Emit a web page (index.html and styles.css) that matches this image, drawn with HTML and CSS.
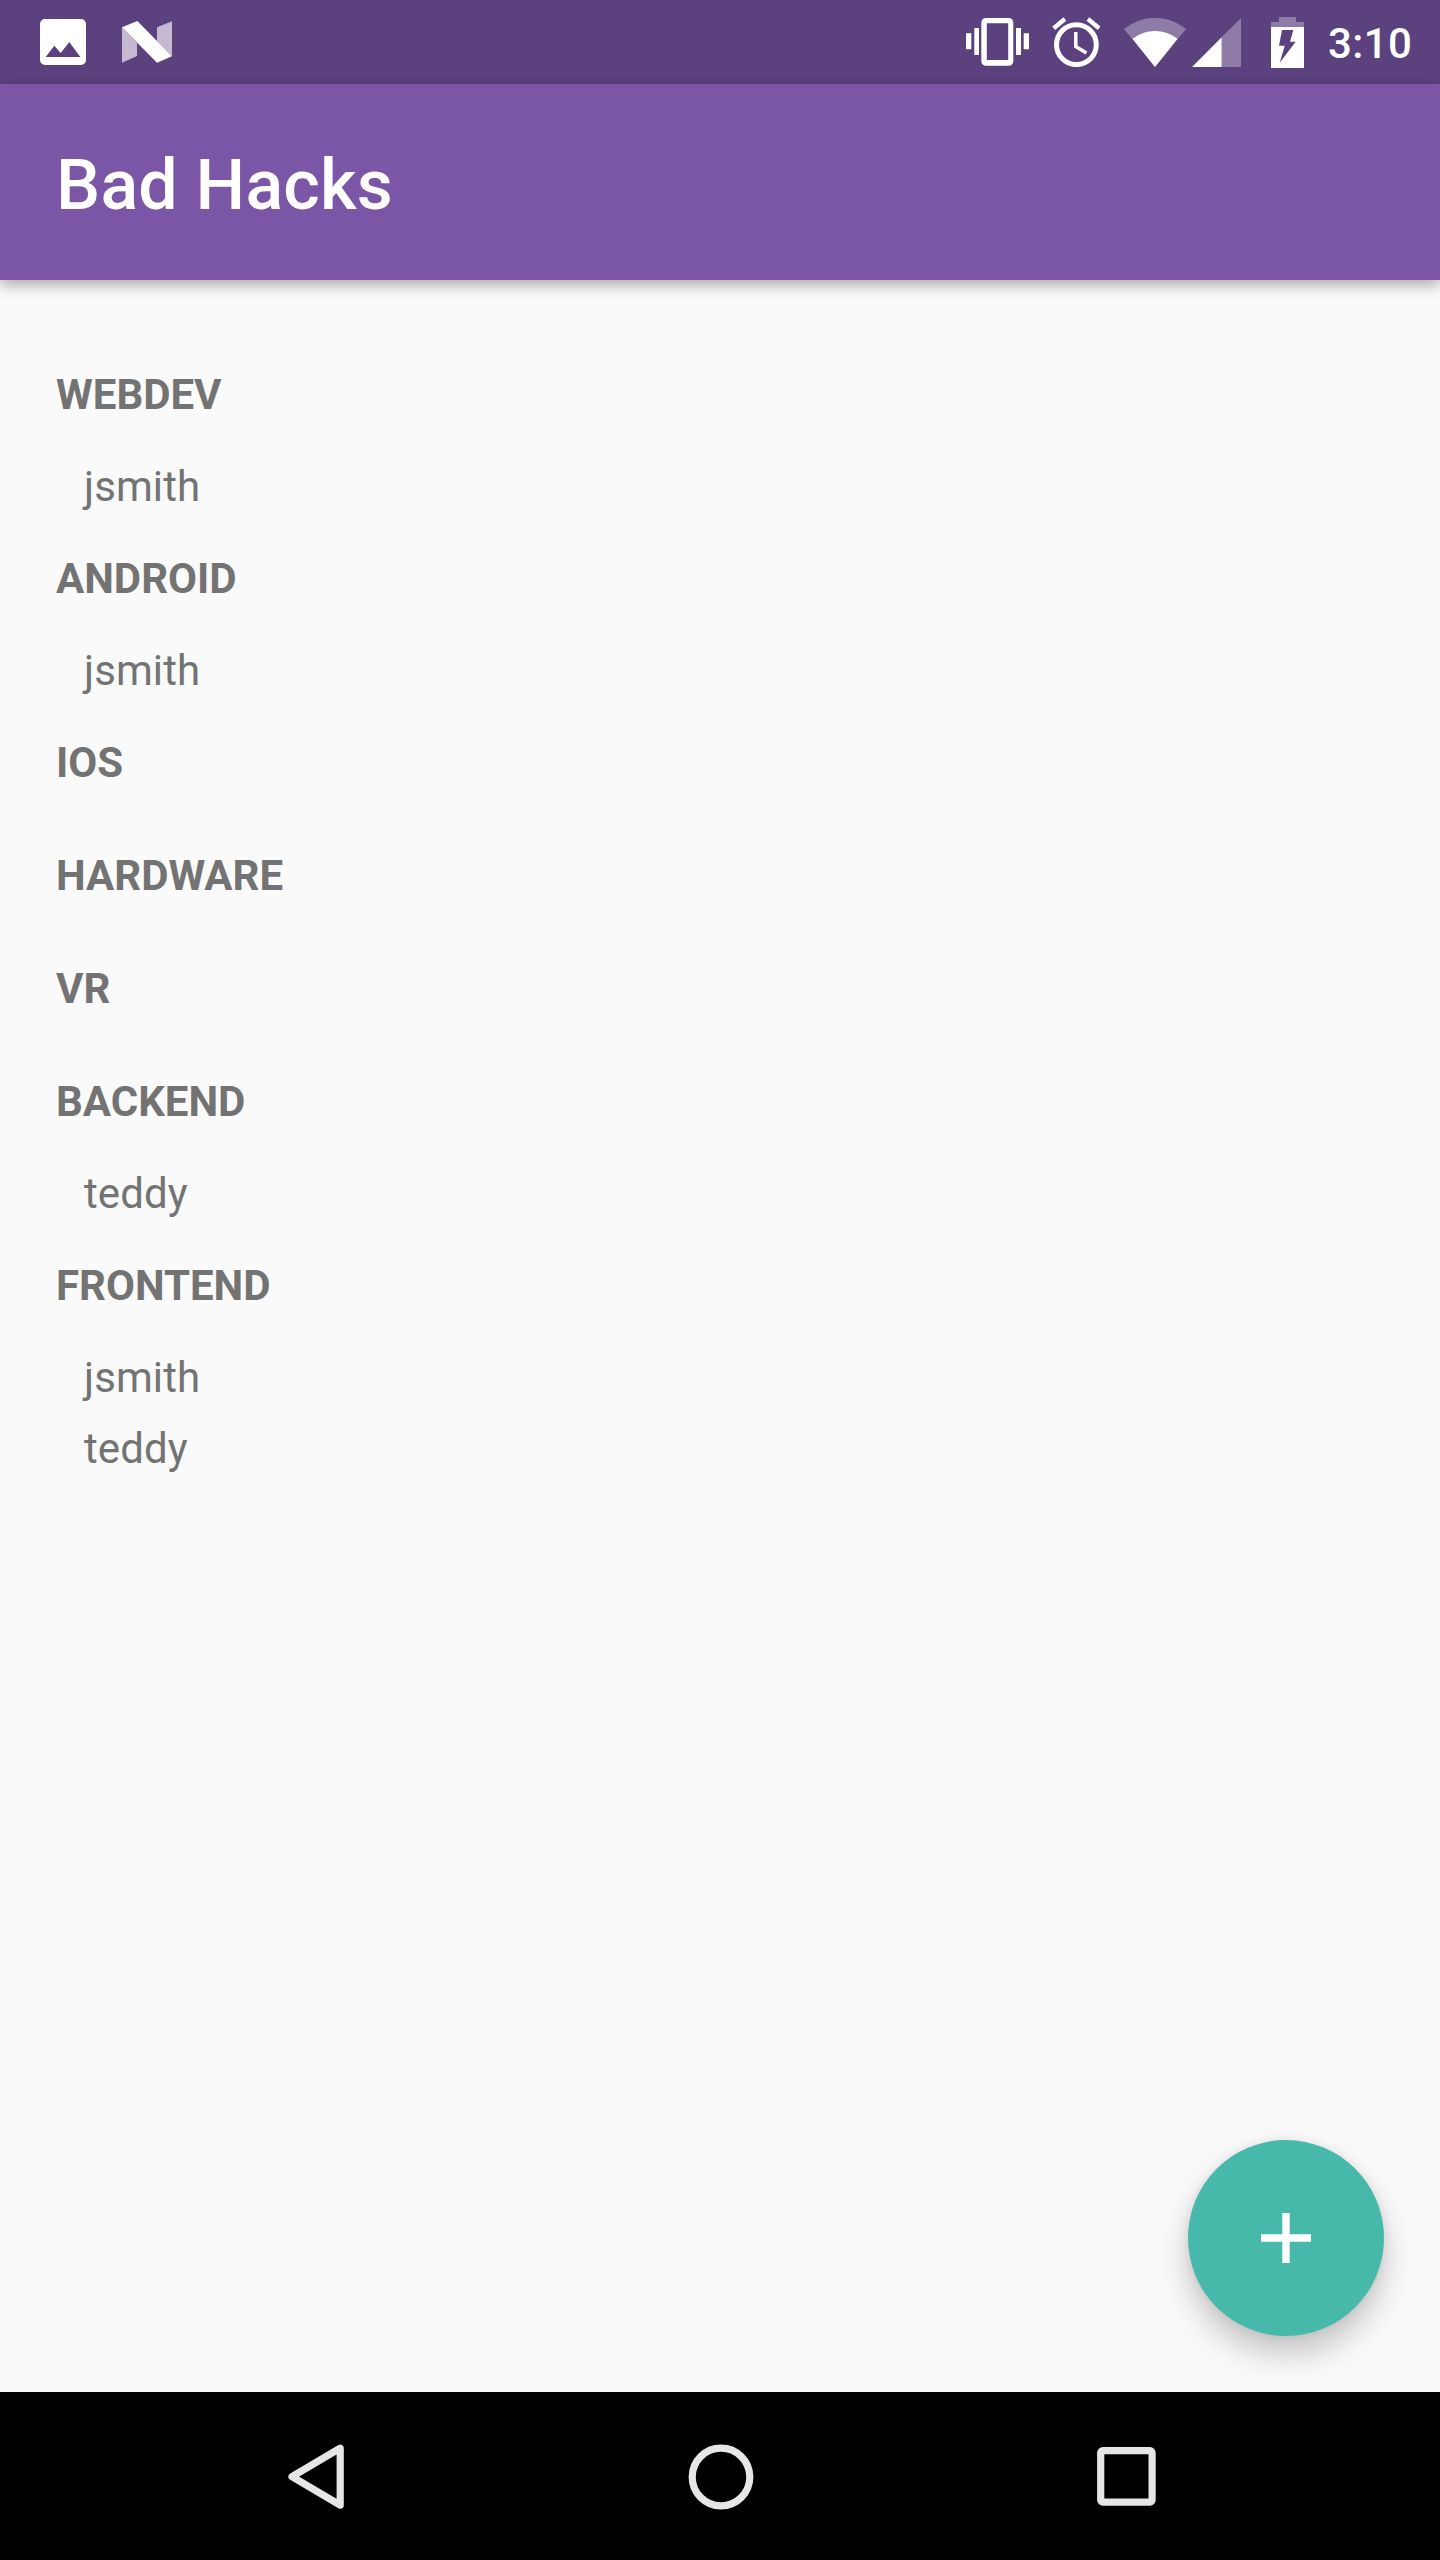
FILE: index.html
```html
<!DOCTYPE html>
<html lang="en">
<head>
    <meta charset="UTF-8">
    <meta name="viewport" content="width=device-width, initial-scale=1.0">
    <title>Bad Hacks</title>
    <link rel="stylesheet" href="styles.css">
</head>
<body>
    <div class="status-bar">
        <div class="notifications">
            <svg width="46" height="46" viewBox="0 0 46 46">
                <path fill="#fff" fill-rule="evenodd" d="M5 0H41A5 5 0 0 1 46 5V41A5 5 0 0 1 41 46H5A5 5 0 0 1 0 41V5A5 5 0 0 1 5 0ZM5.7 38H40.3L29.3 23L20.7 34L14.3 26.7Z"/>
            </svg>
            <svg width="50" height="42" viewBox="0 0 50 42">
                <path class="faded" d="M0 6.3L15 22V35L0 41.7ZM35 6.3L50 .3V35.3L35 20Z"/>
                <path fill="#fff" d="M0 6.3L15.3 0L50 35.3L35 41.7Z"/>
            </svg>
        </div>
        <div class="system">
            <svg width="63" height="48" viewBox="0 0 63 48">
                <path fill="#fff" fill-rule="evenodd" d="M0 15.3H5.3V31.3H0ZM8.3 10H13V37H8.3ZM50 10H55V37H50ZM57.7 15.3H63V31.3H57.7ZM19.8 0H42.8A4.5 4.5 0 0 1 47.3 4.5V43.2A4.5 4.5 0 0 1 42.8 47.7H19.8A4.5 4.5 0 0 1 15.3 43.2V4.5A4.5 4.5 0 0 1 19.8 0ZM20.8 5.3V42H42.2V5.3Z"/>
            </svg>
            <svg class="alarm" width="49" height="50" viewBox="0 0 49 50" fill="none" stroke="#fff">
                <circle cx="24.4" cy="27.7" r="19.9" stroke-width="5"/>
                <path stroke-width="3.5" d="M23.8 15V29.5L34.4 36"/>
                <path stroke-width="4.4" d="M1.7 11.2L12.9 2M47.1 11.2L35.9 2"/>
            </svg>
            <svg class="wifi" width="62" height="49" viewBox="0 0 62 49">
                <path class="signal-off" d="M31 49L0 11A49 49 0 0 1 62 11Z"/>
                <path fill="#fff" d="M31 49L8.5 20.8A36.7 36.7 0 0 1 53.5 20.8Z"/>
            </svg>
            <svg class="cell" width="49" height="49" viewBox="0 0 49 49">
                <path class="signal-off" d="M29.7 19.3L49 0V49H29.7Z"/>
                <path fill="#fff" d="M0 49L29.7 19.3V49Z"/>
            </svg>
            <svg class="battery" width="33" height="51" viewBox="0 0 33 51">
                <path class="signal-off" d="M8 0H25V5H33V10H0V5H8Z"/>
                <path fill="#fff" fill-rule="evenodd" d="M0 10H33V51H0ZM11 13L8 28.7H13.7L8.7 45.7L24.7 24.7H19L22.3 13Z"/>
            </svg>
            <span class="clock">3:10</span>
        </div>
    </div>

    <header class="toolbar">
        <h1>Bad Hacks</h1>
    </header>

    <main class="content">
        <h2>WEBDEV</h2>
        <p>jsmith</p>
        <h2>ANDROID</h2>
        <p>jsmith</p>
        <h2>IOS</h2>
        <h2>HARDWARE</h2>
        <h2>VR</h2>
        <h2>BACKEND</h2>
        <p>teddy</p>
        <h2>FRONTEND</h2>
        <p>jsmith</p>
        <p>teddy</p>

        <button class="fab" aria-label="Add">
            <svg width="50" height="50" viewBox="0 0 50 50">
                <path fill="#fff" d="M21.3 0H28.7V21.3H50V28.7H28.7V50H21.3V28.7H0V21.3H21.3Z"/>
            </svg>
        </button>
    </main>

    <nav class="nav-bar">
        <svg width="57" height="65" viewBox="0 0 57 65">
            <path d="M4 32.7L52.2 4.2V61.2Z"/>
        </svg>
        <svg width="66" height="66" viewBox="0 0 66 66">
            <circle cx="33" cy="33" r="28.8"/>
        </svg>
        <svg width="59" height="59" viewBox="0 0 59 59">
            <rect x="3.7" y="3.7" width="51.4" height="51.4" rx="2.2"/>
        </svg>
    </nav>
</body>
</html>
```
FILE: styles.css
```css
* {
    box-sizing: border-box;
}

body {
    margin: 0;
    height: 2560px;
    display: flex;
    flex-direction: column;
    background-color: #fafafa;
    color: #737373;
    font-family: Roboto, sans-serif;
    font-size: 42px;
}

svg {
    display: block;
    flex-shrink: 0;
}

.status-bar {
    height: 84px;
    padding: 0 28px 0 40px;
    display: flex;
    justify-content: space-between;
    align-items: center;
    background-color: #5b417e;
}

.notifications {
    display: flex;
    align-items: center;
    gap: 36px;
}

.system {
    display: flex;
    align-items: center;
}

.alarm,
.wifi {
    margin-left: 23px;
}

.cell {
    margin-left: 6px;
}

.battery {
    margin-left: 30px;
}

.clock {
    width: 108px;
    padding: 3px 0 0 24px;
    color: #fff;
    font-weight: 500;
    line-height: 50px;
    letter-spacing: 0.4px;
}

.faded {
    fill: #c4b9d0;
}

.signal-off {
    fill: #8f7ba8;
}

.toolbar {
    height: 196px;
    padding: 6px 56px 0;
    display: flex;
    align-items: center;
    background-color: #7b55a6;
    box-shadow: 0 5px 14px rgba(0, 0, 0, 0.33);
    z-index: 1;
}

.toolbar h1 {
    margin: 0;
    color: #fff;
    font-size: 70px;
    font-weight: 500;
    line-height: 82px;
    letter-spacing: 0.2px;
}

.content {
    position: relative;
    flex: 1;
    padding: 58px 56px 0;
}

.content h2 {
    margin: 0;
    padding: 21px 0;
    font-size: 42px;
    font-weight: 700;
    line-height: 71px;
}

.content p {
    margin: 0;
    padding-left: 28px;
    line-height: 71px;
    letter-spacing: 0.1px;
}

.fab {
    position: absolute;
    right: 56px;
    bottom: 56px;
    width: 196px;
    height: 196px;
    padding: 0;
    display: flex;
    justify-content: center;
    align-items: center;
    border: none;
    border-radius: 50%;
    background-color: #47b9ab;
    box-shadow: 0 18px 32px rgba(0, 0, 0, 0.22), 0 0 10px rgba(0, 0, 0, 0.08);
}

.nav-bar {
    height: 168px;
    padding: 1px 284px 0 288px;
    display: flex;
    justify-content: space-between;
    align-items: center;
    background-color: #000;
}

.nav-bar svg {
    fill: none;
    stroke: #e6e6e6;
    stroke-width: 7.2;
    stroke-linejoin: round;
}
```
